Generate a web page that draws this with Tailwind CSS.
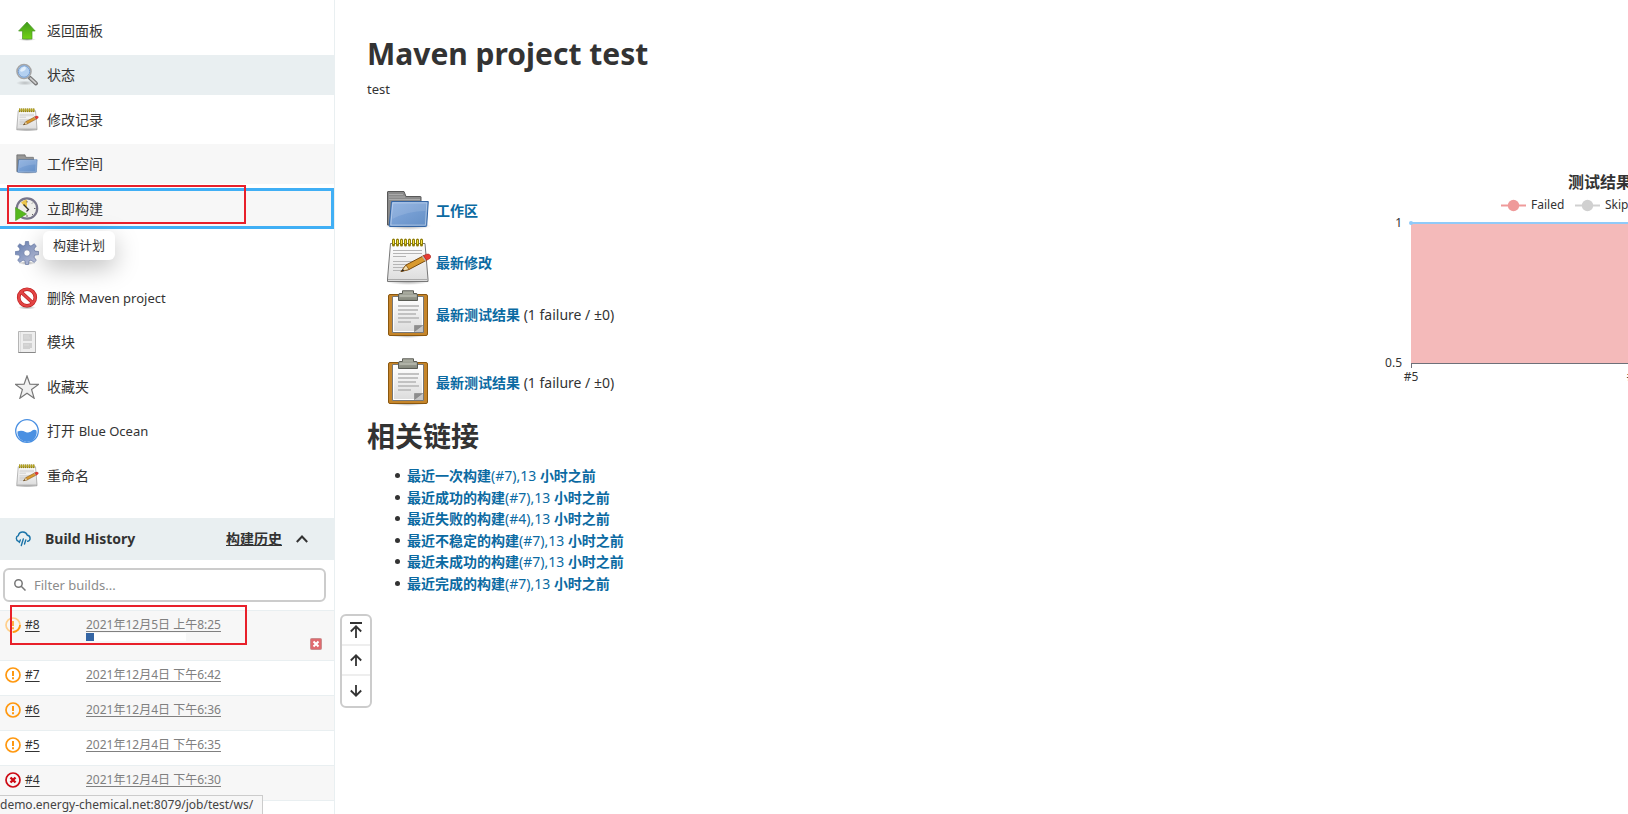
<!DOCTYPE html>
<html lang="zh-CN">
<head>
<meta charset="utf-8">
<title>test [Jenkins]</title>
<script src="https://cdn.jsdelivr.net/npm/@tailwindcss/browser@4"></script>
</head>
<body class="relative h-screen overflow-hidden bg-white font-['Noto_Sans','Noto_Sans_CJK_SC',sans-serif] text-sm text-[#333]">

<svg class="absolute size-0" aria-hidden="true">
  <defs>
    <linearGradient id="paper" x1="0" y1="0" x2="0" y2="1"><stop offset="0" stop-color="#fff"/><stop offset="1" stop-color="#dcdcdc"/></linearGradient>
    <linearGradient id="blue" x1="0" y1="0" x2="1" y2="1"><stop offset="0" stop-color="#87ace0"/><stop offset="1" stop-color="#648fc5"/></linearGradient>
    <linearGradient id="green" x1="0" y1="0" x2="0" y2="1"><stop offset="0" stop-color="#3f9a1c"/><stop offset="1" stop-color="#73d216"/></linearGradient>
    <linearGradient id="clip" x1="0" y1="0" x2="0" y2="1"><stop offset="0" stop-color="#b0b2a6"/><stop offset="1" stop-color="#83867b"/></linearGradient>
    <linearGradient id="gearfill" x1="0" y1="0" x2="1" y2="1"><stop offset="0" stop-color="#5f79ab"/><stop offset="1" stop-color="#c5c9e2"/></linearGradient>
    <radialGradient id="shade"><stop offset="0" stop-color="#000" stop-opacity=".35"/><stop offset="1" stop-color="#000" stop-opacity="0"/></radialGradient>
    <symbol id="folder" viewBox="0 0 48 48">
      <ellipse cx="24" cy="40" rx="23" ry="4" fill="url(#shade)"/>
      <path d="M3.500 39V6q0-.5.5-.5h16l2 5h14.500q.5 0 .5.5v28z" fill="#8a8a8a" stroke="#585858"/>
      <path d="M5 8.500h14M5 11h16M5 13.500h31" stroke="#aaa"/>
      <path d="M7.500 15.500h36.800l-1.600 24q0 1-1 1H6q-1 0-.8-1z" fill="url(#blue)" stroke="#3465a4"/>
      <path d="M8.800 16.800h34l-1.400 22.300H6.800z" fill="none" stroke="#fff" stroke-opacity=".4"/>
      <path d="M9 17h33l-.5 8q-18 0-33 8z" fill="#fff" opacity=".12"/>
    </symbol>
    <symbol id="notepad" viewBox="0 0 48 48">
      <ellipse cx="24" cy="43.500" rx="22" ry="3.500" fill="url(#shade)"/>
      <path d="M6.500 5.500h34.500l3 35.500v2.500H3.500V41z" fill="url(#paper)" stroke="#777"/>
      <path d="M4 41.500h40" stroke="#aaa"/>
      <path d="M9 12.500h29M9 15.500h29M9 18.500h13M9 23.500h24M9 26.500h20M9 29.500h15M9 32.500h10" stroke="#b5b5b5"/>
      <path d="M9.500 2v5M13.500 2v5M17.500 2v5M21.500 2v5M25.500 2v5M29.500 2v5M33.500 2v5M37.500 2v5" stroke="#8f7d05" stroke-width="3" stroke-linecap="round"/>
      <path d="M9.500 2v4M13.500 2v4M17.500 2v4M21.500 2v4M25.500 2v4M29.500 2v4M33.500 2v4M37.500 2v4" stroke="#f0e040" stroke-width="1"/>
      <path d="M17 33.500l5-6.500 18-9.500 3 4.500-18 9.500z" fill="#d99a2e" stroke="#7a4b10"/>
      <path d="M17 33.500l5-6.500 3 4.500z" fill="#f3dfb0" stroke="#7a4b10" stroke-width=".7"/>
      <path d="M17 33.500l2-2.600 1.300 1.800z" fill="#222"/>
      <path d="M38 18.500l3 4.600 1.500-.8-3-4.700z" fill="#bbb"/>
      <path d="M39.500 17.700l3-1.500q3-.8 4 1.500.6 2-1 3l-3 1.600z" fill="#e83a32" stroke="#9d2018" stroke-width=".6"/>
    </symbol>
    <symbol id="clipboard" viewBox="0 0 48 48">
      <ellipse cx="24" cy="45.500" rx="18" ry="2.500" fill="url(#shade)"/>
      <rect x="4.500" y="4.500" width="39" height="41" rx="1.500" fill="#c5852a" stroke="#8a570f"/>
      <path d="M8.500 6.500h31v36h-31z" fill="#eee" stroke="#777"/>
      <path d="M9.500 7.500h29v34h-29z" fill="url(#paper)" stroke="#fff"/>
      <path d="M14 16h21M14 20h20M14 24h18M14 28h21M14 32h13" stroke="#c2c2c2" stroke-width="2"/>
      <path d="M30.500 42V35.500h8.500z" fill="#8d8d8d" stroke="#777" stroke-width=".5"/><path d="M30.500 42l8.500-6.500V42z" fill="#c6c6c6"/>
      <path d="M14.500 10.500V5q0-1.500 1.500-1.500h2.500V.8h11v2.700H32q1.500 0 1.500 1.500v5.500z" fill="url(#clip)" stroke="#5a5c55"/>
      <path d="M15.500 6h17" stroke="#c9cbc0"/>
    </symbol>
    <symbol id="warn" viewBox="0 0 16 16"><circle cx="8" cy="8" r="7" fill="none" stroke="#ff9810" stroke-width="1.700"/><path d="M7 4h2v5H7zM7 10.200h2v2H7z" fill="#ff9810"/></symbol>
  </defs>
</svg>

<div class="flex h-full">
  <aside class="w-[335px] shrink-0 overflow-hidden border-r border-[#e9eff1]">
    <nav class="flex flex-col gap-1 pt-[11px]">
      <a href="#" class="flex h-10 items-center gap-2 pl-[15px]">
        <svg class="size-6" viewBox="0 0 24 24"><ellipse cx="12" cy="20.500" rx="9" ry="1.500" fill="url(#shade)"/><path d="M12 3L20.200 12H17v8H7.500v-8H3.600z" fill="url(#green)" stroke="#4c9a2a" stroke-width=".7"/></svg>
        返回面板</a>
      <a href="#" class="mb-px flex h-10 items-center gap-2 bg-[#e9eff1] pl-[15px]">
        <svg class="size-6" viewBox="0 0 24 24"><ellipse cx="10" cy="20" rx="9" ry="2.500" fill="url(#shade)" opacity=".6"/><path d="M14.500 14.500l6.500 6" stroke="#777" stroke-width="4" stroke-linecap="round"/><path d="M15.500 15.300l5.200 4.800" stroke="#ccc" stroke-width="1.800" stroke-linecap="round"/><circle cx="9" cy="8.500" r="7" fill="#b3d0f0" stroke="#a5a5a5" stroke-width="1.600"/><circle cx="9" cy="8.500" r="5.700" fill="none" stroke="#789fd0"/><path d="M5 8q1-4 5-4.500 2 2-.5 4T5 8z" fill="#e2effc"/></svg>
        状态</a>
      <a href="#" class="flex h-10 items-center gap-2 pl-[15px]"><svg class="size-6"><use href="#notepad"/></svg>修改记录</a>
      <a href="#" class="flex h-10 items-center gap-2 bg-[#f7f7f7] pl-[15px]"><svg class="size-6"><use href="#folder"/></svg>工作空间</a>
      <a href="#" class="flex h-[41px] items-center gap-2 border-y-3 border-r-3 border-[#40aff5] bg-[#f7f7f7] pl-[15px]">
        <svg class="size-6" viewBox="0 0 24 24"><circle cx="12" cy="11.500" r="10.200" fill="#eeeeea" stroke="#77758a" stroke-width="2.200"/><path d="M12 12L6 5.500q2.500-2.700 6-3z" fill="#ecc64c"/><path d="M12 4v1.500M12 18v2M19 11.500h1.500M17 6.500l1-1M17 17l1 1" stroke="#666"/><path d="M8.500 7.500l5 5-2 2" fill="none" stroke="#333" stroke-width="1.300"/><path d="M.6 10.500L11.500 17 .6 23.500z" fill="#55b91d" stroke="#4f9c28" stroke-width=".7"/></svg>
        立即构建</a>
      <a href="#" aria-label="配置" class="mb-px flex h-10 items-center pl-[15px]">
        <svg class="size-6" viewBox="0 0 24 24"><ellipse cx="12" cy="22" rx="9" ry="2" fill="url(#shade)"/><path fill="url(#gearfill)" stroke="#687aa5" stroke-width=".7" fill-rule="evenodd" d="M10.500.5h3l.5 3.800 2 .8 3.200-2.300 2.100 2.100-2.300 3.100.8 2.100 3.900.5v3l-3.900.5-.8 2 2.300 3.200-2.100 2.100-3.200-2.300-2 .8-.5 3.600h-3l-.5-3.600-2-.8-3.200 2.300-2.100-2.100L5 16.100l-.8-2-3.900-.5v-3l3.900-.5L5 8 2.700 4.900l2.100-2.100L8 5.100l2-.8zM12 8.800a3.200 3.200 0 100 6.400 3.200 3.200 0 000-6.400z"/></svg>
      </a>
      <a href="#" class="flex h-10 items-center gap-2 pl-[15px]">
        <svg class="size-6" viewBox="0 0 24 24"><ellipse cx="12" cy="21.500" rx="9" ry="2" fill="url(#shade)"/><circle cx="12" cy="11.500" r="8.300" fill="#fff" stroke="#bd2020" stroke-width="3.600"/><path d="M6 6l12 11" stroke="#bd2020" stroke-width="3.600"/><circle cx="12" cy="11.500" r="8.300" fill="none" stroke="#e34545" stroke-width="2.300"/><path d="M6 6l12 11" stroke="#e34545" stroke-width="2.300"/></svg>
        <span>删除 <span class="text-[13px]">Maven project</span></span></a>
      <a href="#" class="mb-px flex h-10 items-center gap-2 pl-[15px]">
        <svg class="size-6" viewBox="0 0 24 24"><path d="M3.500 1.500h17v21h-17z" fill="#eee" stroke="#b5b5b5"/><path d="M3.500 22.500h17" stroke="#888"/><path d="M5.500 2v20" stroke="#ddd"/><path d="M8 4h9v7H8zM8 13h9v5h-2v1H8z" fill="#d0d0d0"/><path d="M9 6h5M9 8h6M9 15h5" stroke="#dcdcdc"/></svg>
        模块</a>
      <a href="#" class="flex h-10 items-center gap-2 pl-[15px]">
        <svg class="size-6" viewBox="0 0 24 24"><path d="M12 1l2.900 8.200 8.600.2-6.900 5.200 2.500 8.600L12 18.200l-7.100 5 2.500-8.600L.5 9.400l8.600-.2z" fill="#f1f1f1" stroke="#777" stroke-width="1.200"/></svg>
        收藏夹</a>
      <a href="#" class="mb-px flex h-10 items-center gap-2 pl-[15px]">
        <svg class="size-6" viewBox="0 0 24 24"><circle cx="12" cy="12" r="11.300" fill="#fff" stroke="#4a90e2" stroke-width="1.300"/><path d="M2.500 12.500q4-1.500 8 .4t7.500-1.800q1.800-.9 3.500.4a9.600 9.600 0 11-19 1z" fill="#4a90e2"/></svg>
        <span>打开 <span class="text-[13px]">Blue Ocean</span></span></a>
      <a href="#" class="flex h-10 items-center gap-2 pl-[15px]"><svg class="size-6"><use href="#notepad"/></svg>重命名</a>
    </nav>

    <section class="mt-[22px]">
      <header class="flex h-[42px] items-center bg-[#e9eff1] pl-[15px] pr-[26px] font-bold">
        <svg class="h-4 w-4" viewBox="0 0 16 16" fill="none" stroke="#1a73a8" stroke-width="1.400" stroke-linecap="round"><path d="M3.500 10.300A3 3 0 013.300 4.600 4.700 4.700 0 0112.300 4.200a3.100 3.100 0 01.4 6.100M5.300 9l-1 2.600M8.300 8l-2 6.500M10.800 9l-1.300 4"/></svg>
        <h2 class="ml-[14px] flex-1">Build History</h2>
        <a href="#" class="underline">构建历史</a>
        <button type="button" aria-label="收起" class="ml-[14px]"><svg class="h-3 w-3" viewBox="0 0 12 12" fill="none" stroke="#333" stroke-width="2"><path d="M.8 9L6 3.500 11.200 9"/></svg></button>
      </header>
      <div class="py-2 pl-[3px] pr-2">
        <label class="flex h-[34px] items-center gap-2 rounded-md border-2 border-[#ccc] pl-[9px]">
          <svg class="h-3 w-3" viewBox="0 0 12 12" fill="none" stroke="#777" stroke-width="1.500"><circle cx="4.500" cy="4.500" r="3.700"/><path d="M7.200 7.200l4.300 4.300"/></svg>
          <input type="text" aria-label="Filter builds" placeholder="Filter builds..." class="min-w-0 flex-1 pt-px text-[13px] outline-none placeholder:text-[#8c8c8c]">
        </label>
      </div>
      <table class="w-full table-fixed border-collapse text-xs leading-4">
        <colgroup><col class="w-[86px]"><col></colgroup>
        <tbody>
          <tr class="h-[50px] border-t border-[#e9eff1] bg-[#f7f7f7] align-top">
            <td class="pt-[6px] pl-[5px]"><span class="flex items-center gap-1"><svg class="size-4" viewBox="0 0 16 16"><circle cx="8" cy="8" r="7" fill="none" stroke="#ffcf8c" stroke-width="1.700"/><path d="M15 8a7 7 0 01-7 7" fill="none" stroke="#ff9810" stroke-width="1.800"/><path d="M7 4h2v5H7zM7 10.200h2v2H7z" fill="#ffb14a"/></svg><a href="#" class="underline underline-offset-2">#8</a></span></td>
            <td class="pt-[6px]">
              <a href="#" class="block text-[#808080] underline underline-offset-2">2021年12月5日 上午8:25</a>
              <div class="flex items-start justify-between pr-3"><div class="h-2 w-[100px] bg-white"><div class="h-2 bg-[#3465a4]" style="width:8%"></div></div>
              <button type="button" aria-label="取消" class="mt-[5px]"><svg class="block size-3" viewBox="0 0 12 12"><rect x=".5" y=".5" width="11" height="11" rx="1" fill="#df6b6f" stroke="#c98f90"/><path d="M3.500 3.500l5 5M8.500 3.500l-5 5" stroke="#fff" stroke-width="2"/></svg></button></div>
            </td>
          </tr>
          <tr class="h-[35px] border-t border-[#e9eff1] align-top"><td class="pt-[6px] pl-[5px]"><span class="flex items-center gap-1"><svg class="size-4"><use href="#warn"/></svg><a href="#" class="underline underline-offset-2">#7</a></span></td><td class="pt-[6px]"><a href="#" class="text-[#808080] underline underline-offset-2">2021年12月4日 下午6:42</a></td></tr>
          <tr class="h-[35px] border-t border-[#e9eff1] bg-[#f7f7f7] align-top"><td class="pt-[6px] pl-[5px]"><span class="flex items-center gap-1"><svg class="size-4"><use href="#warn"/></svg><a href="#" class="underline underline-offset-2">#6</a></span></td><td class="pt-[6px]"><a href="#" class="text-[#808080] underline underline-offset-2">2021年12月4日 下午6:36</a></td></tr>
          <tr class="h-[35px] border-t border-[#e9eff1] align-top"><td class="pt-[6px] pl-[5px]"><span class="flex items-center gap-1"><svg class="size-4"><use href="#warn"/></svg><a href="#" class="underline underline-offset-2">#5</a></span></td><td class="pt-[6px]"><a href="#" class="text-[#808080] underline underline-offset-2">2021年12月4日 下午6:35</a></td></tr>
          <tr class="h-[35px] border-y border-[#e9eff1] bg-[#f7f7f7] align-top"><td class="pt-[6px] pl-[5px]"><span class="flex items-center gap-1"><svg class="size-4" viewBox="0 0 16 16"><circle cx="8" cy="8" r="7" fill="none" stroke="#cc0a14" stroke-width="1.700"/><path d="M5.500 5.500l5 5M10.500 5.500l-5 5" stroke="#cc0a14" stroke-width="2.400"/></svg><a href="#" class="underline underline-offset-2">#4</a></span></td><td class="pt-[6px]"><a href="#" class="text-[#808080] underline underline-offset-2">2021年12月4日 下午6:30</a></td></tr>
        </tbody>
      </table>
    </section>
  </aside>

  <main class="min-w-0 flex-1 overflow-hidden pt-[33px] pl-8">
    <h1 class="text-[30px] leading-[42px] font-bold">Maven project test</h1>
    <p class="mt-1 text-[13px] leading-5">test</p>
    <div class="mt-[61px] flex items-start justify-between">
      <ul class="pt-6 pl-[17px]">
        <li class="flex h-[52px] items-center gap-1"><svg class="size-12"><use href="#folder"/></svg><a href="#" class="pt-px font-bold text-[#0b6aa2]">工作区</a></li>
        <li class="flex h-[52px] items-center gap-1"><svg class="size-12"><use href="#notepad"/></svg><a href="#" class="pt-px font-bold text-[#0b6aa2]">最新修改</a></li>
        <li class="flex h-[52px] items-center gap-1"><svg class="size-12"><use href="#clipboard"/></svg><span class="pt-px"><a href="#" class="font-bold text-[#0b6aa2]">最新测试结果</a> (1 failure / ±0)</span></li>
        <li class="mt-4 flex h-[52px] items-center gap-1"><svg class="size-12"><use href="#clipboard"/></svg><span class="pt-px"><a href="#" class="font-bold text-[#0b6aa2]">最新测试结果</a> (1 failure / ±0)</span></li>
      </ul>
      <svg class="h-60 w-[260px] shrink-0 overflow-hidden" viewBox="0 0 260 240" role="img" aria-label="测试结果趋势" fill="#333" font-size="12">
        <text x="200" y="28" font-size="16" font-weight="700">测试结果趋势</text>
        <path d="M133 45.500h25" stroke="#ef9a9a" stroke-width="2"/><circle cx="145.500" cy="45.500" r="5.700" fill="#ef9a9a"/><text x="163" y="49">Failed</text>
        <path d="M207 45.500h25" stroke="#d0d0d0" stroke-width="2"/><circle cx="219.500" cy="45.500" r="5.700" fill="#d0d0d0"/><text x="237" y="49">Skipped</text>
        <path d="M43 63h217v140H43z" fill="#f4baba"/>
        <path d="M43 63h217" stroke="#90caf9" stroke-width="2"/><circle cx="43" cy="63" r="2" fill="#90caf9"/>
        <path d="M43 203.500h217M43.500 203v5" stroke="#6e7079" fill="none"/>
        <text x="34" y="67" text-anchor="end">1</text><text x="34" y="207" text-anchor="end">0.5</text>
        <text x="43" y="221" text-anchor="middle">#5</text><text x="266" y="221" text-anchor="middle">#6</text>
      </svg>
    </div>
    <h2 class="mt-2 text-[28px] leading-10 font-bold">相关链接</h2>
    <ul class="mt-[9px] pl-7 leading-[21px] font-bold [&_a]:text-[#0b6aa2] [&>li]:flex [&>li]:items-center [&>li]:gap-[7px] [&>li]:before:size-[5px] [&>li]:before:rounded-full [&>li]:before:bg-[#333]">
      <li class="mb-px"><a href="#">最近一次构建<span class="font-normal">(#7),13 </span>小时之前</a></li>
      <li><a href="#">最近成功的构建<span class="font-normal">(#7),13 </span>小时之前</a></li>
      <li class="mb-px"><a href="#">最近失败的构建<span class="font-normal">(#4),13 </span>小时之前</a></li>
      <li><a href="#">最近不稳定的构建<span class="font-normal">(#7),13 </span>小时之前</a></li>
      <li class="mb-px"><a href="#">最近未成功的构建<span class="font-normal">(#7),13 </span>小时之前</a></li>
      <li><a href="#">最近完成的构建<span class="font-normal">(#7),13 </span>小时之前</a></li>
    </ul>
  </main>
</div>

<div role="tooltip" class="absolute top-[231px] left-[43px] rounded-md bg-white px-[10px] py-1 text-[13px] leading-[21px] shadow-[0_8px_24px_rgba(0,0,0,0.25)]">构建计划</div>
<div class="absolute top-[185px] left-[7px] h-[39px] w-[239px] border-2 border-[#e8202a]"></div>
<div class="absolute top-[605px] left-[10px] h-10 w-[237px] border-2 border-[#e8202a]"></div>

<div class="absolute top-[614px] left-[340px] flex w-8 flex-col divide-y-2 divide-[#eee] rounded-md border-2 border-[#ccc] bg-white">
  <button type="button" aria-label="回到顶部" class="flex h-[30px] items-center justify-center"><svg class="h-4 w-3" viewBox="0 0 12 16" fill="none" stroke="#333" stroke-width="1.800"><path d="M0 1h12M6 16V4.500M.8 9.500L6 4.300l5.200 5.200"/></svg></button>
  <button type="button" aria-label="向上" class="flex h-[30px] items-center justify-center"><svg class="size-3" viewBox="0 0 12 12" fill="none" stroke="#333" stroke-width="1.800"><path d="M6 12V1.500M.8 6.500L6 1.300l5.200 5.200"/></svg></button>
  <button type="button" aria-label="向下" class="flex h-[30px] items-center justify-center"><svg class="size-3" viewBox="0 0 12 12" fill="none" stroke="#333" stroke-width="1.800"><path d="M6 0v10.500M.8 5.500L6 10.700l5.200-5.200"/></svg></button>
</div>

<div class="absolute bottom-0 left-0 border-t border-r border-[#ccc] bg-[#f7f7f7] pr-[9px] text-xs leading-[18px] text-[#444]">demo.energy-chemical.net:8079/job/test/ws/</div>
</body>
</html>
